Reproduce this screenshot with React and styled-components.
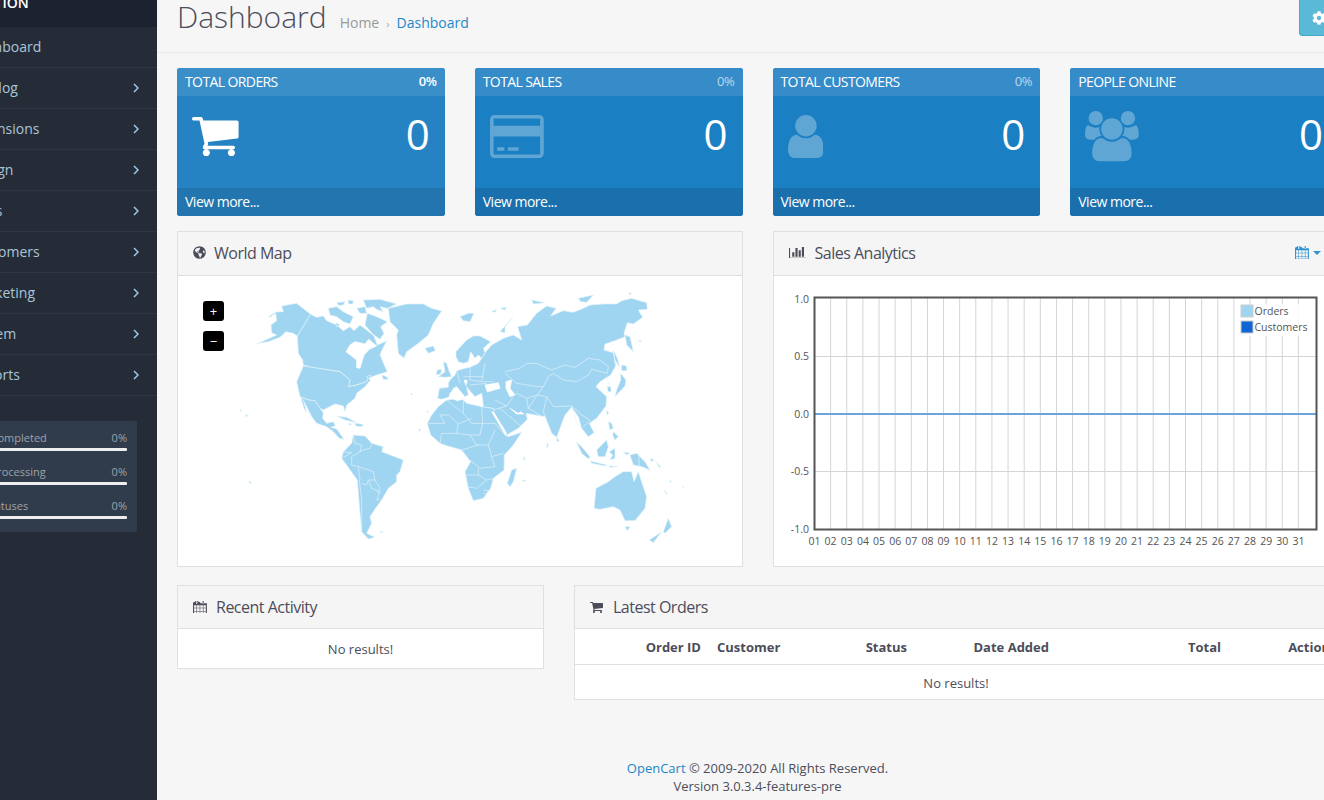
import React from "react";
import styled, { createGlobalStyle } from "styled-components";
import { FaGlobeAmericas, FaCog } from "react-icons/fa";

const Global = createGlobalStyle`
  html, body { margin: 0; padding: 0; background: #f6f6f6; }
  body { font-family: "Open Sans", "Liberation Sans", sans-serif; font-size: 13px; color: #4c4d5a; }
`;

const Viewport = styled.div`width: 1324px; height: 800px; overflow: hidden; position: relative;`;
const Page = styled.div`display: flex; margin: -33px 0 0 -78px; width: 1500px; align-items: stretch;`;

const Sidebar = styled.aside`width: 235px; flex: none; background: #252c38; min-height: 900px;`;
const NavHead = styled.div`
  height: 60px; box-sizing: border-box; padding: 26px 0 0 20px; background: #1c2230;
  color: #fff; font-weight: 600; font-size: 14px; line-height: 20px;
`;
const NavItem = styled.div`
  height: 41px; box-sizing: border-box; border-bottom: 1px solid #2d3744; padding: 0 18px 2px 47px;
  display: flex; align-items: center; justify-content: space-between;
  color: #a9c5d9; font-size: 14px;
`;
const Chevron = styled.svg`width: 6px; height: 10px; flex: none; margin-top: 2px;`;
const Stats = styled.div`
  margin: 25px 20px 0 15px; background: #303c4b; border-radius: 2px; padding: 9px 10px 0 15px; box-sizing: border-box; height: 111px;
`;
const StatRow = styled.div`height: 34px; box-sizing: border-box;`;
const StatText = styled.div`
  display: flex; justify-content: space-between; font-size: 11px; line-height: 16px; color: #9ea3a9;
`;
const StatBar = styled.div`height: 3px; background: #eee; margin-top: 2px; border-radius: 1px;`;

const Main = styled.main`flex: none; width: 1265px;`;
const PageHeader = styled.header`
  height: 86px; box-sizing: border-box; border-bottom: 1px solid #e8e8e8; padding: 0 0 0 20px;
  display: flex; justify-content: space-between; position: relative;
`;
const HeaderLeft = styled.div`display: flex; align-items: baseline; padding-top: 27px;`;
const Title = styled.h1`margin: 0; font-size: 30px; line-height: 46px; font-weight: 300; color: #4c4d5a;`;
const Crumbs = styled.div`display: flex; align-items: baseline; margin-left: 13px; font-size: 14px; color: #999;`;
const Sep = styled.span`font-size: 11px; color: #aaa; margin: 0 7px 0 7px;`;
const CrumbLink = styled.a`color: #1e87c8;`;
const GearButton = styled.div`
  position: absolute; left: 1142px; top: 0; width: 39px; height: 69px; box-sizing: border-box;
  background: #5bb9d8; border: 1px solid #46a9c9; border-radius: 3px; color: #fff;
  display: flex; align-items: flex-end; justify-content: center; padding-bottom: 10px; font-size: 14px;
`;

const Container = styled.div`width: 1161px; margin-left: 20px;`;
const Cards = styled.div`display: grid; grid-template-columns: repeat(4, 267.75px); column-gap: 30px; margin-top: 15px;`;
const Card = styled.section`border-radius: 3px; overflow: hidden; color: #fff; background: ${p => p.$active ? "#2583c4" : "#1b7fc3"};`;
const CardHead = styled.div`
  height: 28px; box-sizing: border-box; padding: 0 8px 2px; display: flex; align-items: center; justify-content: space-between;
  font-size: 14px; background: ${p => p.$active ? "#3b8fc9" : "#368bc9"};
`;
const CardTitle = styled.span`letter-spacing: -0.6px; font-weight: 400;`;
const Pct = styled.span`font-size: 13px; letter-spacing: -0.3px; font-weight: ${p => p.$active ? 600 : 400}; opacity: ${p => p.$active ? 1 : 0.65};`;
const CardBody = styled.div`
  height: 92px; box-sizing: border-box; padding: 0 15px 11px; display: flex; align-items: center; justify-content: space-between;
`;
const Big = styled.span`font-size: 42px; line-height: 50px; margin-bottom: 6px; font-weight: 400;`;
const CardIcon = styled.svg`display: block; fill: #fff; opacity: ${p => p.$active ? 1 : 0.3};`;
const CardFoot = styled.div`
  height: 28px; box-sizing: border-box; padding: 0 8px 2px; display: flex; align-items: center; font-size: 14px; letter-spacing: -0.5px;
  background: ${p => p.$active ? "#2275ae" : "#1a70ad"};
`;

const Row2 = styled.div`display: grid; grid-template-columns: 565.5px 565.5px; column-gap: 30px; margin-top: 15px;`;
const Row3 = styled.div`display: grid; grid-template-columns: 367px 764px; column-gap: 30px; margin-top: 18px; align-items: start;`;
const Panel = styled.section`border: 1px solid #e0e0e0; background: #fff; box-sizing: border-box;`;
const Heading = styled.div`
  height: ${p => p.$h}px; box-sizing: border-box; background: #f5f5f5; border-bottom: 1px solid #e0e0e0;
  padding: 0 15px ${p => p.$h === 44 ? 2 : 0}px; display: flex; align-items: center; font-size: 16px; color: #4c4d5a; letter-spacing: -0.5px;
`;
const IconSlot = styled.span`width: ${p => p.$w}px; flex: none; display: flex; align-items: center; font-size: 13px;`;
const Glyph = styled.svg`display: block; fill: currentColor;`;
const Spacer = styled.span`flex: 1;`;
const RangeToggle = styled.span`display: flex; align-items: center; gap: 4px; color: #2f93cf; margin-right: 1px;`;
const Caret = styled.span`width: 0; height: 0; border: 4px solid transparent; border-top-color: #2f93cf; border-bottom: 0;`;

const MapBody = styled.div`position: relative; height: 290px;`;
const MapSvg = styled.svg`display: block; width: 564px; height: 290px;`;
const ZoomBtn = styled.div`
  position: absolute; left: 25px; top: ${p => p.$top}px; width: 21px; height: 20px; background: #000; border-radius: 3px;
  color: #fff; display: flex; align-items: center; justify-content: center; font-size: 13px; line-height: 1;
`;
const ChartSvg = styled.svg`display: block; width: 564px; height: 290px;`;

const Empty = styled.div`text-align: center; height: ${p => p.$h}px; box-sizing: border-box; padding-top: 1px; line-height: ${p => p.$h}px; font-size: 13px; color: #4c4d5a;`;
const TableRow = styled.div`
  display: grid; grid-template-columns: 134px 100px 106px 142px 172px 109px; height: 36px; box-sizing: border-box; align-items: center;
  border-bottom: 1px solid #e0e0e0; font-weight: 700; font-size: 13px; color: #4c4d5a;
`;
const Th = styled.div`padding: 0 8px; white-space: nowrap; text-align: ${p => p.$left ? "left" : "right"};`;

const Footer = styled.footer`
  width: 1161px; margin: 59px 0 0 20px; text-align: center; font-size: 13px; line-height: 18px; color: #4c4d5a;
`;
const FootLink = styled.a`color: #1e87c8;`;

const P = {
  cart: "M704 1536q0 52-38 90t-90 38-90-38-38-90 38-90 90-38 90 38 38 90zm896 0q0 52-38 90t-90 38-90-38-38-90 38-90 90-38 90 38 38 90zm128-1088v512q0 24-16.500 42.500t-40.500 21.500l-1044 122q13 60 13 70 0 16-24 64h920q26 0 45 19t19 45-19 45-45 19h-1024q-26 0-45-19t-19-45q0-11 8-31.500t16-36 21.500-40 15.500-29.500l-177-823h-204q-26 0-45-19t-19-45 19-45 45-19h256q16 0 28.500 6.500t19.500 15.500 13 24.500 8 26 5.500 29.500 4.500 26h1201q26 0 45 19t19 45z",
  card: "M1760 128q66 0 113 47t47 113v1216q0 66-47 113t-113 47h-1600q-66 0-113-47t-47-113v-1216q0-66 47-113t113-47h1600zm-1600 128q-13 0-22.500 9.500t-9.500 22.500v224h1664v-224q0-13-9.500-22.500t-22.500-9.500h-1600zm1600 1280q13 0 22.500-9.500t9.500-22.500v-608h-1664v608q0 13 9.500 22.500t22.500 9.500h1600zm-1504-128v-128h256v128h-256zm384 0v-128h384v128h-384z",
  user: "M1536 1399q0 109-62.500 187t-150.500 78h-854q-88 0-150.500-78t-62.500-187q0-85 8.500-160.500t31.500-152 58.500-131 94-89 134.500-34.500q131 128 313 128t313-128q76 0 134.500 34.500t94 89 58.500 131 31.500 152 8.500 160.500zm-256-887q0 159-112.500 271.500t-271.500 112.500-271.500-112.500-112.500-271.500 112.500-271.500 271.500-112.500 271.500 112.500 112.500 271.500z",
  users: "M593 896q-162 5-265 128h-134q-82 0-138-40.500t-56-118.500q0-353 124-353 6 0 43.500 21t97.500 42.500 119 21.500q67 0 133-23-5 37-5 66 0 139 81 256zm1071 637q0 120-73 189.500t-194 69.500h-874q-121 0-194-69.500t-73-189.500q0-53 3.500-103.500t14-109 26.500-108.500 43-97.500 62-81 85.500-53.500 111.500-20q10 0 43 21.500t73 48 107 48 135 21.500 135-21.500 107-48 73-48 43-21.500q61 0 111.500 20t85.500 53.500 62 81 43 97.500 26.500 108.500 14 109 3.500 103.500zm-1024-1277q0 106-75 181t-181 75-181-75-75-181 75-181 181-75 181 75 75 181zm704 384q0 159-112.500 271.500t-271.500 112.500-271.500-112.500-112.500-271.500 112.500-271.500 271.500-112.500 271.500 112.500 112.500 271.500zm576 225q0 78-56 118.500t-138 40.500h-134q-103-123-265-128 81-117 81-256 0-29-5-66 66 23 133 23 59 0 119-21.500t97.500-42.500 43.500-21q124 0 124 353zm-128-609q0 106-75 181t-181 75-181-75-75-181 75-181 181-75 181 75 75 181z",
  calendar: "M192 1664h288v-288h-288v288zm352 0h320v-288h-320v288zm-352-352h288v-320h-288v320zm352 0h320v-320h-320v320zm-352-384h288v-288h-288v288zm736 736h320v-288h-320v288zm-384-736h320v-288h-320v288zm768 736h288v-288h-288v288zm-384-352h320v-320h-320v320zm-352-864v-288q0-13-9.500-22.500t-22.500-9.500h-64q-13 0-22.500 9.500t-9.500 22.500v288q0 13 9.500 22.500t22.500 9.500h64q13 0 22.500-9.500t9.500-22.500zm736 864h288v-320h-288v320zm-384-384h320v-288h-320v288zm384 0h288v-288h-288v288zm32-480v-288q0-13-9.500-22.500t-22.500-9.500h-64q-13 0-22.500 9.500t-9.500 22.500v288q0 13 9.500 22.500t22.500 9.500h64q13 0 22.500-9.500t9.500-22.500zm384-64v1280q0 52-38 90t-90 38h-1408q-52 0-90-38t-38-90v-1280q0-52 38-90t90-38h128v-96q0-66 47-113t113-47h64q66 0 113 47t47 113v96h128q52 0 90 38t38 90z",
  bars: "M640 896v512h-256v-512h256zm384-512v1024h-256v-1024h256zm1024 1152v128h-2048v-1280h128v1152h1920zm-640-896v768h-256v-768h256zm384-384v1152h-256v-1152h256z",
};

const SCALE = 0.028;
function BigIcon({ name, box, active }) {
  const [, , w, h] = box;
  return (
    <CardIcon $active={active} viewBox={box.join(" ")} width={w * SCALE} height={h * SCALE}>
      <path d={P[name]} />
    </CardIcon>
  );
}

function SmallIcon({ name, box, size }) {
  const [, , w, h] = box;
  return (
    <Glyph viewBox={box.join(" ")} width={(w * size) / 1792} height={(h * size) / 1792}>
      <path d={P[name]} />
    </Glyph>
  );
}

const americas = [
  "305,78 350,70 392,103 352,168 340,160 318,155 300,172 265,185 245,188 228,193 250,183 290,165 275,158 273,135 290,122 287,100 270,112 266,110 288,96 310,95",
  "392,103 410,112 430,108 440,122 470,135 490,152 510,140 522,152 540,135 560,150 582,168 592,195 620,183 605,212 600,225 615,260 622,275 590,285 565,295 560,305 530,315 505,320 510,300 480,275 370,258 368,240 355,220 352,168",
  "370,258 480,275 510,300 505,320 530,315 560,305 565,295 572,300 555,320 530,340 525,355 500,375 495,395 490,378 465,372 430,390 420,385 405,362 385,360 360,350 350,305",
  "360,350 385,360 405,362 420,385 430,398 428,415 440,430 460,425 466,437 452,442 470,447 492,478 478,475 460,455 440,440 410,430 395,410 375,370",
  "363,355 370,360 380,398 372,385",
  "445,85 470,80 490,95 520,110 510,132 490,125 470,110 450,105",
  "470,68 495,65 490,75 475,76", "505,60 520,62 518,72 505,72", "468,128 480,135 470,140",
  "550,60 600,58 650,72 622,85 600,80 610,95 590,88 580,80 560,85",
  "530,85 555,80 560,100 540,100", "562,100 590,110 622,125 602,140 612,160 600,178 578,162 555,135",
  "605,285 620,290 625,298 610,298", "560,290 572,285 568,298",
  "625,85 680,72 730,72 755,85 785,93 760,130 745,165 715,190 680,215 672,235 655,220 650,165 655,150 630,125",
  "735,205 760,198 766,212 745,220",
  "520,465 555,468 575,490 610,500 605,515 670,540 660,575 650,585 650,605 625,625 605,660 590,680 570,710 575,730 560,760 585,772 565,777 545,755 540,700 532,600 485,535 490,515 515,490",
  "470,408 500,412 530,428 495,420", "525,430 550,433 545,440 528,438", "505,430 515,432 510,436",
  "790,245 800,250 808,275 815,290 795,292 775,290 795,275", "772,270 785,268 782,282 768,285",
  "180,388 186,392 182,394", "196,404 204,406 200,411", "718,446 722,450 716,456", "205,604 214,606 212,611",
  "692,340 698,343 694,346", "742,392 746,396 742,398", "600,755 610,754 604,759",
];

const americaHoles = [
  "498,215 510,195 525,185 538,188 555,192 566,178 590,198 568,208 552,225 540,265 530,263 530,240",
];

const americaBorders = [
  "520,465 525,490 545,495 540,515 515,530 515,555 535,560 540,600",
  "575,490 570,505 550,510 540,515", "485,535 515,518 490,515",
  "535,560 580,575 585,600 565,600 575,625 600,635 590,660 605,660",
  "538,600 545,660 545,750", "585,600 600,625 592,640", "545,610 560,615 565,600",
  "375,258 385,255", "363,240 375,258",
];

const afro = [
  "-68,430 -55,405 -35,380 -10,360 35,355 50,370 95,380 130,385 165,465 175,470 215,457 190,495 163,525 162,570 130,595 122,625 100,655 70,662 55,625 45,575 62,545 35,510 -10,497 -30,490 -58,465",
  "105,218 125,195 160,175 190,165 215,180 203,140 215,138 232,135 260,100 290,78 318,85 302,108 340,92 370,97 400,85 420,75 460,72 500,72 515,62 545,55 590,68 592,88 565,90 578,112 550,132 532,128 522,160 525,170 495,182 465,192 462,210 490,218 497,258 482,285 450,305 438,320 470,350 468,378 440,415 418,430 432,458 415,470 395,445 385,410 365,382 345,405 320,472 305,460 285,410 272,408 228,400 232,418 205,445 170,465 135,405 130,385 100,380 98,358 95,340 75,350 62,335 50,320 55,345 45,350 20,320 10,325 -5,352 -25,358 -37,355 -32,325 -5,322 -5,310 0,300 15,285 20,272 45,265 60,262 85,250 95,235",
  "18,215 50,180 70,168 90,168 122,185 100,205 105,218 95,235 85,225 75,235 62,215 55,245 40,250 25,245 18,230",
  "172,610 185,570 200,565 190,605 180,620",
  "322,472 328,484 320,484",
  "380,487 395,500 420,530 415,537 395,520",
  "420,543 470,555 465,558 425,550", "478,557 505,560 480,562",
  "440,510 460,490 470,480 475,500 465,530 445,530",
  "478,515 495,505 495,535 480,540 488,525",
  "475,425 485,430 490,445 480,450", "490,455 505,470 495,480 488,465",
  "520,515 540,520 530,525",
  "540,525 560,520 585,545 600,570 575,560 550,555",
  "600,535 612,540 605,545", "618,545 632,560 628,562", "660,600 664,605 660,608", "700,618 702,622 698,622", "642,630 652,640 648,642",
  "432,685 438,625 475,605 495,590 520,575 545,575 552,605 565,575 590,650 585,685 555,722 525,722 510,690 490,680 450,688",
  "525,740 540,740 532,752",
  "640,755 655,715 665,740 645,760", "598,780 635,755 610,788",
  "495,350 525,318 528,300 512,280 512,300 500,330", "515,255 530,258 530,272 515,272",
  "525,165 540,170 550,215 530,195", "490,210 502,235 510,262 495,240",
  "472,320 482,320 484,335 474,335", "470,390 476,400 470,404", "565,180 575,183 570,186",
  "30,110 55,100 72,100 60,125 40,122", "125,95 140,88 135,97", "150,85 170,82 165,90",
  "150,155 190,110 165,140 165,158", "245,60 285,68 250,72", "385,55 430,45 410,67 392,65", "535,38 545,40 540,44",
  "292,490 296,495 290,505", "222,530 226,538 220,540", "215,602 228,600 222,605",
];

const afroHoles = [
  "105,315 145,308 150,325 112,336", "168,305 185,300 180,325 195,345 180,350 168,325",
  "125,395 132,398 170,460 162,458", "180,385 205,400 212,395 222,402 200,402",
  "42,300 52,302 48,316", "0,338 40,358 20,362 0,350",
];

const afroBorders = [
  "165,275 210,265 230,250 260,250 305,270 345,255 375,262 415,235 450,240 475,260 472,280 425,268 415,285 380,305 340,300 310,280 295,290 280,320 262,320 200,310 165,280",
  "280,320 262,345 290,350 310,380 365,378 395,405 420,420 400,440", "235,385 230,355 200,340 195,345",
  "230,355 262,345 235,385 275,408", "290,350 280,395 305,460", "365,378 380,430 395,445",
  "130,390 170,378 190,350", "150,385 215,440", "135,360 170,378",
  "40,355 40,400 -10,360", "95,380 98,430 135,430 165,465", "40,400 65,430 98,430", "-65,430 -15,430 -30,405 -5,405 25,432 65,415",
  "25,432 20,460 60,465 90,465 98,430", "-30,490 -25,460 20,460", "60,465 80,495 115,495 135,450", "115,495 125,530 160,520", "35,510 85,495",
  "60,540 90,565 135,560 125,530", "45,585 85,585 85,565", "50,620 80,625 110,600 130,595", "85,585 110,600", "100,630 115,632 108,642 100,640",
  "60,265 60,300 95,305 130,305", "20,272 30,310", "40,290 100,290", "60,315 110,310", "566,520 568,560",
  "95,305 105,250", "470,290 480,320",
];

const WorldMap = () => (
  <MapSvg viewBox="178 276 564 290">
    <g transform="translate(180 280) scale(0.33333)" fill="#9fd5f1" stroke="#e4f3fb" strokeWidth="2" strokeLinejoin="round">
      {americas.map(p => <polygon key={p} points={p} />)}
      {americaHoles.map(p => <polygon key={p} points={p} fill="#fff" stroke="#fff" />)}
      {americaBorders.map(p => <polyline key={p} points={p} fill="none" />)}
    </g>
    <g transform="translate(450 280) scale(0.33333)" fill="#9fd5f1" stroke="#e4f3fb" strokeWidth="2" strokeLinejoin="round">
      {afro.map(p => <polygon key={p} points={p} />)}
      {afroHoles.map(p => <polygon key={p} points={p} fill="#fff" stroke="#fff" />)}
      {afroBorders.map(p => <polyline key={p} points={p} fill="none" />)}
    </g>
  </MapSvg>
);

const days = Array.from({ length: 31 }, (_, i) => String(i + 1).padStart(2, "0"));
const X0 = 814.5, DX = 16.13;
const ticks = [["1.0", 299], ["0.5", 356], ["0.0", 414], ["-0.5", 471], ["-1.0", 529]];

const Chart = () => (
  <ChartSvg viewBox="774 276 564 290" fontFamily="'Open Sans', sans-serif" fontSize="10.5" fill="#545454">
    {days.slice(1).map((d, i) => <line key={d} x1={X0 + DX * (i + 1)} x2={X0 + DX * (i + 1)} y1="298" y2="530" stroke="#d5d5d5" strokeWidth="1" />)}
    <line x1="814" x2="1316" y1="356.5" y2="356.5" stroke="#d5d5d5" />
    <line x1="814" x2="1316" y1="471.5" y2="471.5" stroke="#d5d5d5" />
    <line x1="814" x2="1316" y1="414" y2="414" stroke="#6ba3dc" strokeWidth="2" />
    <rect x="814.500" y="297.500" width="502" height="232" fill="none" stroke="#545454" strokeWidth="2" />
    {ticks.map(([t, y]) => <text key={t} x="809" y={y + 4} textAnchor="end">{t}</text>)}
    {days.map((d, i) => <text key={d} x={X0 + DX * i} y="545" textAnchor="middle">{d}</text>)}
    <rect x="1240" y="304" width="71" height="32" fill="#fff" opacity="0.85" />
    <rect x="1241" y="305" width="12" height="12" fill="#9fd5f1" stroke="#ccc" />
    <rect x="1241" y="321" width="12" height="12" fill="#0f65d3" stroke="#ccc" />
    <text x="1254.500" y="315">Orders</text>
    <text x="1254.500" y="331">Customers</text>
  </ChartSvg>
);

const nav = ["Catalog", "Extensions", "Design", "Sales", "Customers", "Marketing", "System", "Reports"];
const stats = ["Orders Completed", "Orders Processing", "Other Statuses"];
const cards = [
  { title: "Total Orders", name: "cart", box: [64, 256, 1664, 1408], active: true, pct: true },
  { title: "Total Sales", name: "card", box: [0, 128, 1920, 1536], pct: true },
  { title: "Total Customers", name: "user", box: [256, 128, 1280, 1536], pct: true },
  { title: "People Online", name: "users", box: [0, 0, 1920, 1792] },
];

export default function App() {
  return (
    <Viewport>
      <Global />
      <Page>
        <Sidebar>
          <NavHead>NAVIGATION</NavHead>
          <NavItem>Dashboard</NavItem>
          {nav.map(n => (
            <NavItem key={n}>
              {n}
              <Chevron viewBox="0 0 6 10"><polyline points="1,1 5,5 1,9" fill="none" stroke="#9ccbec" strokeWidth="1.5" /></Chevron>
            </NavItem>
          ))}
          <Stats>
            {stats.map(s => (
              <StatRow key={s}>
                <StatText><span>{s}</span><span>0%</span></StatText>
                <StatBar />
              </StatRow>
            ))}
          </Stats>
        </Sidebar>
        <Main>
          <PageHeader>
            <HeaderLeft>
              <Title>Dashboard</Title>
              <Crumbs>Home<Sep>›</Sep><CrumbLink>Dashboard</CrumbLink></Crumbs>
            </HeaderLeft>
            <GearButton><FaCog /></GearButton>
          </PageHeader>
          <Container>
            <Cards>
              {cards.map(c => (
                <Card key={c.title} $active={c.active}>
                  <CardHead $active={c.active}>
                    <CardTitle>{c.title.toUpperCase()}</CardTitle>
                    {c.pct && <Pct $active={c.active}>0%</Pct>}
                  </CardHead>
                  <CardBody>
                    <BigIcon name={c.name} box={c.box} active={c.active} />
                    <Big>0</Big>
                  </CardBody>
                  <CardFoot $active={c.active}>View more...</CardFoot>
                </Card>
              ))}
            </Cards>
            <Row2>
              <Panel>
                <Heading $h={44}><IconSlot $w={21}><FaGlobeAmericas /></IconSlot>World Map</Heading>
                <MapBody>
                  <WorldMap />
                  <ZoomBtn $top={25}>+</ZoomBtn>
                  <ZoomBtn $top={55}>−</ZoomBtn>
                </MapBody>
              </Panel>
              <Panel>
                <Heading $h={44}>
                  <IconSlot $w={26}><SmallIcon name="bars" box={[0, 256, 2048, 1408]} size={15} /></IconSlot>
                  Sales Analytics
                  <Spacer />
                  <RangeToggle><SmallIcon name="calendar" box={[64, 128, 1664, 1536]} size={15} /><Caret /></RangeToggle>
                </Heading>
                <Chart />
              </Panel>
            </Row2>
            <Row3>
              <Panel>
                <Heading $h={43}><IconSlot $w={23}><SmallIcon name="calendar" box={[64, 128, 1664, 1536]} size={15} /></IconSlot>Recent Activity</Heading>
                <Empty $h={39}>No results!</Empty>
              </Panel>
              <Panel>
                <Heading $h={43}><IconSlot $w={23}><SmallIcon name="cart" box={[64, 256, 1664, 1408]} size={14} /></IconSlot>Latest Orders</Heading>
                <TableRow>
                  <Th>Order ID</Th><Th $left>Customer</Th><Th>Status</Th><Th>Date Added</Th><Th>Total</Th><Th>Action</Th>
                </TableRow>
                <Empty $h={34}>No results!</Empty>
              </Panel>
            </Row3>
          </Container>
          <Footer>
            <FootLink>OpenCart</FootLink> © 2009-2020 All Rights Reserved.<br />Version 3.0.3.4-features-pre
          </Footer>
        </Main>
      </Page>
    </Viewport>
  );
}
